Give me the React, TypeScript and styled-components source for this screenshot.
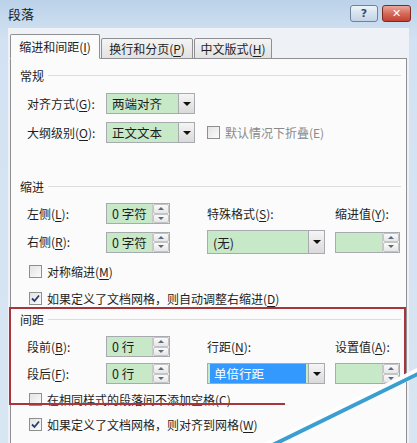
import React from 'react';
import styled, { createGlobalStyle, css } from 'styled-components';

const Global = createGlobalStyle`
  html, body { margin: 0; padding: 0; }
  body {
    width: 417px; height: 443px; overflow: hidden;
    font-family: "Noto Sans CJK SC", "Microsoft YaHei", sans-serif;
    font-size: 12px; color: #1e1e1e;
  }
  u { text-decoration-thickness: 1px; text-underline-offset: 2px; }
`;

const Window = styled.div`
  position: relative;
  width: 417px;
  height: 443px;
  overflow: hidden;
  background: linear-gradient(#bcd2e9, #d3e2f2 40px, #d8e5f2);
  display: flex;
  flex-direction: column;
`;

const TitleBar = styled.div`
  height: 28px;
  display: flex;
  align-items: flex-start;
  padding: 0 6px 0 8px;
  box-sizing: border-box;
`;

const Title = styled.div`
  flex: 1;
  font-size: 13px;
  line-height: 28px;
  color: #1a1a1a;
`;

const CapButton = styled.div<{ $close?: boolean }>`
  margin-top: 5px;
  height: 17px;
  width: ${p => (p.$close ? 29 : 28)}px;
  border-radius: 3px;
  box-sizing: border-box;
  display: flex;
  align-items: center;
  justify-content: center;
  font-family: "DejaVu Sans", sans-serif;
  font-weight: bold;
  font-size: 11px;
  margin-left: ${p => (p.$close ? 4 : 0)}px;
  ${p =>
    p.$close
      ? css`
          border: 1px solid #7a2a22;
          background: linear-gradient(#e9a89c, #d66a5a 50%, #c24232);
          color: #fff;
        `
      : css`
          border: 1px solid #6f8299;
          background: linear-gradient(#eef4fa, #d6e2ef 50%, #c3d4e7);
          color: #3b4c63;
        `}
`;

const Client = styled.div`
  flex: 1;
  margin: 0 8px 0 8px;
  padding: 6px 2px 0 2px;
  background: #eef2f6;
  display: flex;
  flex-direction: column;
`;

const TabRow = styled.div`
  display: flex;
  align-items: flex-end;
  height: 25px;
  position: relative;
  z-index: 1;
  margin-bottom: -1px;
`;

const Tab = styled.div<{ $active?: boolean; $w: number }>`
  width: ${p => p.$w}px;
  box-sizing: border-box;
  display: flex;
  align-items: center;
  justify-content: center;
  border: 1px solid #8e9094;
  border-radius: 2px 2px 0 0;
  ${p =>
    p.$active
      ? css`
          height: 25px;
          background: #fbfbfb;
          border-bottom-color: #fbfbfb;
          margin-right: 1px;
        `
      : css`
          height: 21px;
          background: linear-gradient(#f4f4f4, #e2e2e2);
          margin-right: 1px;
        `}
`;

const Panel = styled.div`
  flex: 1;
  border: 1px solid #8e9094;
  border-bottom: none;
  background: #fbfbfb;
  padding: 8px 0 0 16px;
  display: flex;
  flex-direction: column;
`;

const SectionHeader = styled.div<{ $mt: number }>`
  margin-top: ${p => p.$mt}px;
  margin-left: -7px;
  height: 16px;
  display: flex;
  align-items: center;
  gap: 4px;
  padding-right: 5px;
  &::after {
    content: '';
    flex: 1;
    height: 1px;
    background: #dcdcdc;
  }
`;

const FormRow = styled.div<{ $mt: number }>`
  margin-top: ${p => p.$mt}px;
  height: 21px;
  display: flex;
  align-items: center;
`;

const Label = styled.div<{ $w?: number }>`
  width: ${p => (p.$w ? `${p.$w}px` : 'auto')};
  white-space: nowrap;
  line-height: 16px;
`;

const Grid = styled.div<{ $mt: number; $rows: string }>`
  margin-top: ${p => p.$mt}px;
  display: grid;
  grid-template-columns: 79px 64px 37px 118px 10px 65px;
  grid-template-rows: ${p => p.$rows};
  row-gap: 6px;
  align-items: center;
`;

const Cell = styled.div<{ $col: number }>`
  grid-column: ${p => p.$col};
  display: flex;
  align-items: center;
`;

const FieldBox = styled.div<{ $w: number; $h: number }>`
  width: ${p => p.$w}px;
  height: ${p => p.$h}px;
  box-sizing: border-box;
  border: 1px solid #a7abb0;
  display: flex;
  background: #c7e9c8;
`;

const FieldValue = styled.div`
  flex: 1;
  padding-left: 5px;
  display: flex;
  align-items: center;
  font-size: 12.5px;
  white-space: nowrap;
`;

const Selection = styled.div`
  flex: 1;
  margin: 2px 2px 2px -3px;
  background: #3399ff;
  color: #fff;
  display: flex;
  align-items: center;
  padding-left: 4px;
  font-size: 12.5px;
`;

const SpinCol = styled.div`
  width: 16px;
  display: flex;
  flex-direction: column;
  background: #f4f4f4;
  border-left: 1px solid #c9c9c9;
`;

const SpinBtn = styled.div<{ $down?: boolean }>`
  flex: 1;
  display: flex;
  align-items: center;
  justify-content: center;
  border: 1px solid #c4c4c4;
  border-radius: 2px;
  background: linear-gradient(#fafafa, #e6e6e6);
  &::before {
    content: '';
    width: 0;
    height: 0;
    border-left: 3px solid transparent;
    border-right: 3px solid transparent;
    ${p =>
      p.$down
        ? css`border-top: 3px solid #5a6a80;`
        : css`border-bottom: 3px solid #5a6a80;`}
  }
`;

const DropBtn = styled.div`
  width: 15px;
  border-left: 1px solid #a7abb0;
  background: linear-gradient(#f5f5f5, #dadada);
  display: flex;
  align-items: center;
  justify-content: center;
  &::before {
    content: '';
    width: 0;
    height: 0;
    border-left: 4px solid transparent;
    border-right: 4px solid transparent;
    border-top: 4px solid #111;
  }
`;

const CheckRow = styled.div<{ $mt: number; $disabled?: boolean }>`
  margin-top: ${p => p.$mt}px;
  height: 16px;
  display: flex;
  align-items: center;
  padding-left: 2px;
  color: ${p => (p.$disabled ? '#8a8a8a' : 'inherit')};
  white-space: nowrap;
`;

const Box = styled.div`
  width: 13px;
  height: 13px;
  box-sizing: border-box;
  border: 1px solid #8e8f8f;
  background: linear-gradient(135deg, #e3e3e3, #fbfbfb);
  margin-right: 5px;
  display: flex;
  align-items: center;
  justify-content: center;
`;

const Overlay = styled.svg`
  position: absolute;
  left: 0;
  top: 0;
  pointer-events: none;
`;

const Spin = ({ w, h, text }: { w: number; h: number; text?: string }) => (
  <FieldBox $w={w} $h={h}>
    <FieldValue>{text}</FieldValue>
    <SpinCol>
      <SpinBtn />
      <SpinBtn $down />
    </SpinCol>
  </FieldBox>
);

const Combo = ({ w, h, text, selected }: { w: number; h: number; text: string; selected?: boolean }) => (
  <FieldBox $w={w} $h={h}>
    <FieldValue>{selected ? <Selection>{text}</Selection> : text}</FieldValue>
    <DropBtn />
  </FieldBox>
);

const Check = ({ checked }: { checked?: boolean }) => (
  <Box>
    {checked && (
      <svg width="9" height="9" viewBox="0 0 9 9">
        <path d="M1 4.5 L3.5 7 L8 1.5" fill="none" stroke="#253d6e" strokeWidth="1.8" />
      </svg>
    )}
  </Box>
);

export default function App() {
  return (
    <>
      <Global />
      <Window>
        <TitleBar>
          <Title>段落</Title>
          <CapButton>?</CapButton>
          <CapButton $close>✕</CapButton>
        </TitleBar>
        <Client>
          <TabRow>
            <Tab $active $w={90}>缩进和间距(<u>I</u>)</Tab>
            <Tab $w={92}>换行和分页(<u>P</u>)</Tab>
            <Tab $w={78}>中文版式(<u>H</u>)</Tab>
          </TabRow>
          <Panel>
            <SectionHeader $mt={0}>常规</SectionHeader>
            <FormRow $mt={10}>
              <Label $w={79}>对齐方式(<u>G</u>):</Label>
              <Combo w={89} h={21} text="两端对齐" />
            </FormRow>
            <FormRow $mt={8}>
              <Label $w={79}>大纲级别(<u>O</u>):</Label>
              <Combo w={89} h={21} text="正文文本" />
              <CheckRow $mt={0} $disabled style={{ marginLeft: 10 }}>
                <Check />
                默认情况下折叠(E)
              </CheckRow>
            </FormRow>

            <SectionHeader $mt={35}>缩进</SectionHeader>
            <Grid $mt={9} $rows="21px 24px">
              <Cell $col={1}><Label>左侧(<u>L</u>):</Label></Cell>
              <Cell $col={2}><Spin w={64} h={21} text="0 字符" /></Cell>
              <Cell $col={4}><Label>特殊格式(<u>S</u>):</Label></Cell>
              <Cell $col={6}><Label>缩进值(<u>Y</u>):</Label></Cell>
              <Cell $col={1}><Label>右侧(<u>R</u>):</Label></Cell>
              <Cell $col={2}><Spin w={64} h={21} text="0 字符" /></Cell>
              <Cell $col={4}><Combo w={118} h={24} text="(无)" /></Cell>
              <Cell $col={6}><Spin w={65} h={21} /></Cell>
            </Grid>
            <CheckRow $mt={9}>
              <Check />
              对称缩进(<u>M</u>)
            </CheckRow>
            <CheckRow $mt={11}>
              <Check checked />
              如果定义了文档网格，则自动调整右缩进(<u>D</u>)
            </CheckRow>

            <SectionHeader $mt={5}>间距</SectionHeader>
            <Grid $mt={9} $rows="21px 21px">
              <Cell $col={1}><Label>段前(<u>B</u>):</Label></Cell>
              <Cell $col={2}><Spin w={64} h={21} text="0 行" /></Cell>
              <Cell $col={4}><Label>行距(<u>N</u>):</Label></Cell>
              <Cell $col={6}><Label>设置值(<u>A</u>):</Label></Cell>
              <Cell $col={1}><Label>段后(<u>F</u>):</Label></Cell>
              <Cell $col={2}><Spin w={64} h={21} text="0 行" /></Cell>
              <Cell $col={4}><Combo w={118} h={21} text="单倍行距" selected /></Cell>
              <Cell $col={6}><Spin w={65} h={21} /></Cell>
            </Grid>
            <CheckRow $mt={7}>
              <Check />
              在相同样式的段落间不添加空格(C)
            </CheckRow>
            <CheckRow $mt={9}>
              <Check checked />
              如果定义了文档网格，则对齐到网格(<u>W</u>)
            </CheckRow>
          </Panel>
        </Client>
        <Overlay width="417" height="443" viewBox="0 0 417 443">
          <polyline
            points="285,404 10,404 10,308 405,308 405,378"
            fill="none"
            stroke="#a8343c"
            strokeWidth="2"
          />
          <line x1="240" y1="459" x2="430" y2="366" stroke="#ffffff" strokeWidth="8" />
          <line x1="240" y1="461" x2="430" y2="368" stroke="#3a9fd0" strokeWidth="4" />
        </Overlay>
      </Window>
    </>
  );
}
